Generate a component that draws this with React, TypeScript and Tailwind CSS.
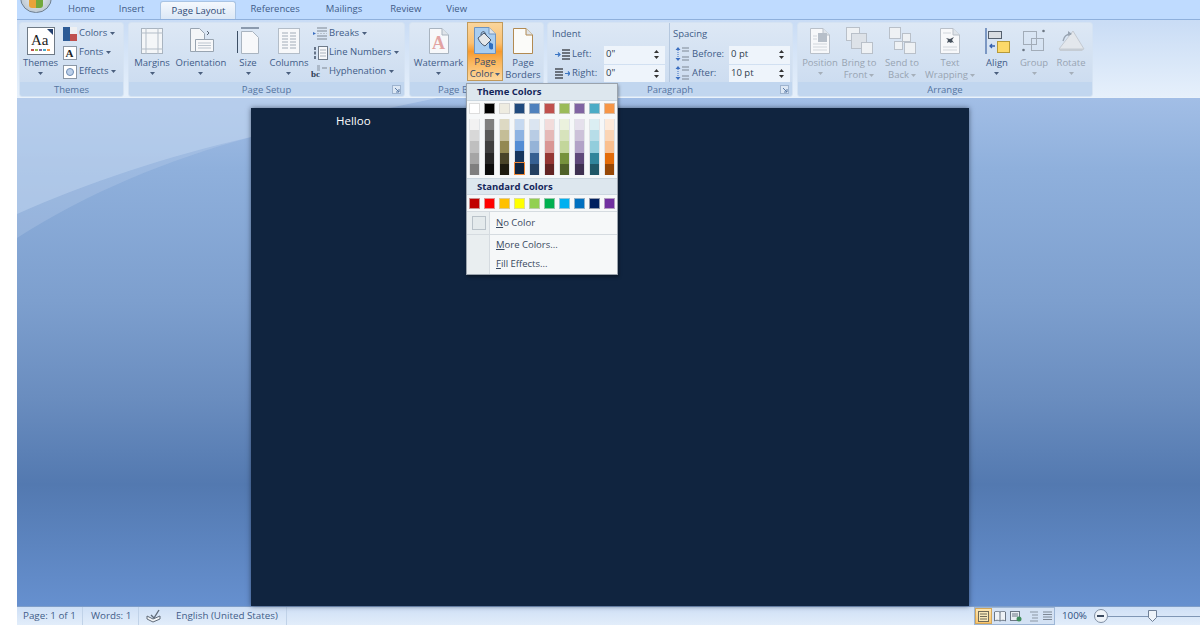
import React from 'react';

const shades = [
  ['#ffffff', '#f2f2f2', '#d8d8d8', '#bfbfbf', '#a5a5a5', '#7f7f7f'],
  ['#000000', '#7f7f7f', '#595959', '#3f3f3f', '#262626', '#0c0c0c'],
  ['#eeece1', '#ddd9c3', '#c4bd97', '#938953', '#494429', '#1d1b10'],
  ['#1f497d', '#c6d9f0', '#8db3e2', '#548dd4', '#17365d', '#0f243e'],
  ['#4f81bd', '#dbe5f1', '#b8cce4', '#95b3d7', '#366092', '#244061'],
  ['#c0504d', '#f2dcdb', '#e5b9b7', '#d99694', '#953734', '#632423'],
  ['#9bbb59', '#ebf1dd', '#d7e3bc', '#c3d69b', '#76923c', '#4f6128'],
  ['#8064a2', '#e5e0ec', '#ccc1d9', '#b2a2c7', '#5f497a', '#3f3151'],
  ['#4bacc6', '#dbeef3', '#b7dde8', '#92cddc', '#31859b', '#205867'],
  ['#f79646', '#fdeada', '#fbd5b5', '#fac08f', '#e36c09', '#974806'],
];
const standard = ['#c00000', '#ff0000', '#ffc000', '#ffff00', '#92d050', '#00b050', '#00b0f0', '#0070c0', '#002060', '#7030a0'];

function Caret({ light }: { light?: boolean }) {
  return (
    <svg width="5" height="3" viewBox="0 0 5 3" className="shrink-0">
      <path d="M0 0h5L2.5 3z" fill={light ? '#a5afba' : '#4a5f7e'} />
    </svg>
  );
}

// page with a folded corner, the base of most ribbon icons
function Doc({ w = 22, h = 28, stroke = '#a9b4c0', fill = '#f7f8fa', children }: { w?: number; h?: number; stroke?: string; fill?: string; children?: React.ReactNode }) {
  return (
    <svg width={w} height={h} viewBox={`0 0 ${w} ${h}`}>
      <path d={`M.5.5H${w - 7}L${w - .5} 7V${h - .5}H.5z`} fill={fill} stroke={stroke} />
      <path d={`M${w - 7} .5V7H${w - .5}`} fill="#dfe4ea" stroke={stroke} />
      {children}
    </svg>
  );
}

function Big({ w, lines, icon, disabled, caret = 'below', active }: { w: number; lines: string[]; icon: React.ReactNode; disabled?: boolean; caret?: 'below' | 'inline' | 'none'; active?: boolean }) {
  const color = disabled ? 'text-[#98a4b2]' : 'text-[#3f5c88]';
  return (
    <div
      style={{ width: w }}
      className={`flex flex-col items-center shrink-0 h-[59px] ${active ? 'border border-[#c19a5b] bg-[linear-gradient(to_bottom,#fad59c_0%,#fbc173_35%,#f79a2e_50%,#fbb85f_70%,#fdd79d_100%)] -mt-px pt-[3px] text-[#34486a]' : `pt-[3px] ${color}`}`}
    >
      <div className="h-[29px] flex items-center justify-center">{icon}</div>
      <div className="mt-[2px] flex flex-col items-center text-[9.5px] leading-[12px] whitespace-nowrap">
        {lines.map((l, i) => (
          <div key={l} className="flex items-center gap-[2px]">
            {l}
            {caret === 'inline' && i === lines.length - 1 && <Caret light={disabled} />}
          </div>
        ))}
        {caret === 'below' && <div className="mt-[3px]"><Caret light={disabled} /></div>}
      </div>
    </div>
  );
}

function Small({ icon, label }: { icon: React.ReactNode; label: string }) {
  return (
    <div className="h-[19px] flex items-center text-[9.5px] text-[#3f5c88] whitespace-nowrap">
      <div className="w-[18px] flex items-center justify-center pr-[1px] shrink-0">{icon}</div>
      <span className="mr-[3px]">{label}</span>
      <Caret />
    </div>
  );
}

function Launcher() {
  return (
    <div className="absolute right-[3px] top-[3px] w-[9px] h-[9px] border border-[#9fb4cf] bg-[#dce7f4] flex items-end justify-end">
      <svg width="5" height="5" viewBox="0 0 5 5"><path d="M0 0l4 4M4 1v3H1" stroke="#5b7ba6" fill="none" /></svg>
    </div>
  );
}

function Group({ w, label, launcher, children, labelColor = 'text-[#54749f]' }: { w: number; label: string; launcher?: boolean; children: React.ReactNode; labelColor?: string }) {
  return (
    <div style={{ width: w }} className="shrink-0 h-[75px] rounded-[3px] border border-[#d5e3f3] bg-[linear-gradient(to_bottom,#dde8f5,#c9daef)] flex flex-col">
      <div className="flex-1 flex min-h-0">{children}</div>
      <div className={`relative h-[14px] shrink-0 bg-[#c1d6ef] rounded-b-[3px] text-center text-[9.5px] leading-[16px] whitespace-nowrap ${labelColor}`}>
        {label}
        {launcher && <Launcher />}
      </div>
    </div>
  );
}

function Spin({ value, w = 61 }: { value: string; w?: number }) {
  return (
    <div style={{ width: w }} className="h-[18px] bg-[#eef4fb] flex items-center justify-between pl-[2px] pr-[6px] text-[9.5px] text-[#2f3b4d] shrink-0">
      {value}
      <div className="flex flex-col gap-[3px]">
        <svg width="5" height="3" viewBox="0 0 5 3"><path d="M0 3h5L2.5 0z" fill="#333" /></svg>
        <svg width="5" height="3" viewBox="0 0 5 3"><path d="M0 0h5L2.5 3z" fill="#333" /></svg>
      </div>
    </div>
  );
}

function IndentIcon({ flip }: { flip?: boolean }) {
  return (
    <svg width="15" height="12" viewBox="0 0 15 12">
      <path d={flip ? 'M0 1h8M0 4h8M0 7h8M0 10h8' : 'M7 1h8M7 4h8M7 7h8M7 10h8'} stroke="#4a4f57" strokeWidth="1.3" />
      <path d={flip ? 'M10 5.500h5m-2-2l2 2-2 2' : 'M0 5.500h5m-2-2l2 2-2 2'} stroke="#3c76c4" strokeWidth="1.2" fill="none" />
    </svg>
  );
}

function SpacingIcon() {
  return (
    <svg width="14" height="15" viewBox="0 0 14 15">
      <path d="M7 1h7M7 4h7M7 10h7M7 13h7" stroke="#7d8794" />
      <path d="M3 0l2.5 3h-5zM3 14l-2.5-3h5z" fill="#3c6fc0" />
      <path d="M3 3v8" stroke="#3c6fc0" strokeDasharray="1 1" />
    </svg>
  );
}

function Swatch({ color }: { color: string }) {
  return <div style={{ background: color }} className="w-[11px] h-[11px] border border-[#cfcfcf]/70" />;
}

function ColorMenu() {
  return (
    <div className="absolute left-[466px] top-[83px] w-[152px] h-[192px] bg-[#f6f8f9] border border-[#9aa3ad] shadow-[1px_2px_3px_rgba(0,0,0,.35)] flex flex-col text-[#3a4a5f]">
      <div className="h-[17px] shrink-0 bg-[#dde7ee] pl-[10px] text-[9.5px] leading-[16px] font-bold text-[#15265a] border-b border-[#cbd7e0]">Theme Colors</div>
      <div className="flex gap-[4px] pl-[2px] pt-[2px] h-[18px] shrink-0">
        {shades.map(col => <Swatch key={col[0]} color={col[0]} />)}
      </div>
      <div className="flex gap-[4px] pl-[2px] h-[59px] shrink-0">
        {shades.map((col, c) => (
          <div key={col[0]} className="w-[11px] h-[56px] flex flex-col border-x border-[#d4d7da]/60">
            {col.slice(1).map((s, r) => (
              <div
                key={r}
                style={{ background: s }}
                className={`flex-1 ${c === 3 && r === 4 ? 'relative z-10 -mx-px border border-[#ee8a3c]' : ''}`}
              />
            ))}
          </div>
        ))}
      </div>
      <div className="h-[17px] shrink-0 bg-[#dde7ee] pl-[10px] text-[9.5px] leading-[15px] font-bold text-[#15265a] border-y border-[#cbd7e0]">Standard Colors</div>
      <div className="flex gap-[4px] pl-[2px] pt-[3px] h-[16px] shrink-0">
        {standard.map(s => <Swatch key={s} color={s} />)}
      </div>
      <div className="flex-1 flex flex-col border-t border-[#d5dbe0] bg-[linear-gradient(to_right,#e9eef0_22px,#d5dbe0_22px,#d5dbe0_23px,transparent_23px)] text-[9.5px]">
        <div className="h-[23px] shrink-0 flex items-center border-b border-[#d5dbe0]">
          <div className="w-[23px] flex justify-center shrink-0"><div className="w-[14px] h-[14px] border border-[#b9c2c9] bg-[#e4eaec]" /></div>
          <span className="ml-[6px]"><span className="underline">N</span>o Color</span>
        </div>
        <div className="h-[20px] shrink-0 flex items-center pl-[29px]"><span><span className="underline">M</span>ore Colors...</span></div>
        <div className="h-[19px] shrink-0 flex items-center pl-[29px]"><span><span className="underline">F</span>ill Effects...</span></div>
      </div>
    </div>
  );
}

export default function App() {
  const tabs = 'px-3 text-[9.5px] leading-[20px] text-[#3f5c88]';
  const gray = '#b9c0c9';
  return (
    <div className="relative w-[1200px] h-[630px] overflow-hidden bg-white flex font-['Open_Sans',sans-serif]">
      <div className="w-[17px] shrink-0" />
      <div className="flex-1 h-[625px] flex flex-col min-w-0">
        {/* tab strip */}
        <div className="h-[19px] shrink-0 bg-[#bfdbff] flex pl-[39px] items-end">
          <div className={tabs}>Home</div>
          <div className={tabs}>Insert</div>
          <div className="ml-[4px] h-[18px] w-[76px] text-center rounded-t-[3px] border border-b-0 border-[#a9c4e4] bg-[linear-gradient(to_bottom,#f4f8fd,#dce8f6)] text-[9.5px] leading-[18px] text-[#2f4a75]">Page Layout</div>
          <div className={`ml-[2px] ${tabs}`}>References</div>
          <div className={`ml-[2px] ${tabs}`}>Mailings</div>
          <div className={`ml-[4px] ${tabs}`}>Review</div>
          <div className={`ml-[1px] ${tabs}`}>View</div>
        </div>

        {/* ribbon */}
        <div className="h-[79px] shrink-0 border-t border-[#8fb0dc] border-b border-b-[#e9f2fb] bg-[linear-gradient(to_bottom,#c9dcf5,#e6f0fb)] flex pl-[2px] pt-[2px]">
          <Group w={105} label="Themes">
            <Big w={41} lines={['Themes']} icon={
              <svg width="28" height="28" viewBox="0 0 28 28">
                <rect x=".5" y=".5" width="27" height="27" fill="#fff" stroke="#6f7a86" />
                <path d="M20 2h6v6z" fill="#24406e" />
                <text x="4" y="18" fontFamily="'Liberation Serif',serif" fontSize="15" fill="#222">Aa</text>
                <path d="M4 23h3" stroke="#c0504d" strokeWidth="2" /><path d="M8 23h3" stroke="#9bbb59" strokeWidth="2" /><path d="M12 23h3" stroke="#8064a2" strokeWidth="2" /><path d="M16 23h3" stroke="#4bacc6" strokeWidth="2" /><path d="M20 23h3" stroke="#f79646" strokeWidth="2" />
              </svg>
            } />
            <div className="pt-[1px]">
              <Small label="Colors" icon={
                <svg width="14" height="14" viewBox="0 0 14 14"><rect width="7" height="14" fill="#2d5b96" /><rect x="7" width="7" height="7" fill="#eef0f2" /><rect x="7" y="7" width="7" height="7" fill="#c0504d" /></svg>
              } />
              <Small label="Fonts" icon={
                <div className="w-[14px] h-[14px] border border-[#8b97a5] bg-white text-[11px] leading-[12px] text-center font-['Liberation_Serif',serif] font-bold text-[#222]">A</div>
              } />
              <Small label="Effects" icon={
                <svg width="14" height="14" viewBox="0 0 14 14"><rect x=".5" y=".5" width="13" height="13" fill="#fff" stroke="#8b97a5" /><circle cx="7" cy="7" r="3.5" fill="#bcd0ea" stroke="#6f8db5" /></svg>
              } />
            </div>
          </Group>
          <div className="w-[4px] shrink-0" />

          <Group w={277} label="Page Setup" launcher>
            <Big w={46} lines={['Margins']} icon={
              <svg width="22" height="26" viewBox="0 0 22 26"><rect x=".5" y=".5" width="21" height="25" fill="#f4f6f8" stroke="#a9b4c0" /><path d="M5 0v26M17 0v26M0 5h22M0 21h22" stroke="#b3bdc8" /></svg>
            } />
            <Big w={52} lines={['Orientation']} icon={
              <svg width="26" height="26" viewBox="0 0 26 26"><path d="M2.500.5h9l5 5v18h-14z" fill="#f4f6f8" stroke="#98a4b1" /><path d="M7.500 11.500h18v12h-18z" fill="#f7f8fa" stroke="#98a4b1" /><path d="M10 15h13M10 17.500h13M10 20h13" stroke="#bcc5cf" /><path d="M19 3l2 2-2 2" stroke="#5a6675" fill="none" /></svg>
            } />
            <Big w={42} lines={['Size']} icon={
              <svg width="22" height="27" viewBox="0 0 22 27"><path d="M4 1h18M.5 4v22" stroke="#3d4f66" /><path d="M4.500 4.500h11l6 6v16h-17z" fill="#f7f8fa" stroke="#a9b4c0" /></svg>
            } />
            <Big w={40} lines={['Columns']} icon={
              <svg width="22" height="26" viewBox="0 0 22 26"><rect x=".5" y=".5" width="21" height="25" fill="#f7f8fa" stroke="#b3bdc8" /><path d="M4 5h6M12 5h6M4 8h6M12 8h6M4 11h6M12 11h6M4 14h6M12 14h6M4 17h6M12 17h6M4 20h6M12 20h6" stroke="#a2acb8" /></svg>
            } />
            <div className="pt-[1px] pl-[2px]">
              <Small label="Breaks" icon={
                <svg width="16" height="14" viewBox="0 0 16 14"><path d="M5 1h10M5 4h10M5 9h10M5 12h10" stroke="#7d8794" /><path d="M1 5l3 1.500-3 1.500z" fill="#3c6fc0" /><path d="M5 6.500h10" stroke="#b9c2cc" strokeDasharray="2 1" /></svg>
              } />
              <Small label="Line Numbers" icon={
                <svg width="16" height="14" viewBox="0 0 16 14"><rect x="6.500" y=".5" width="9" height="13" fill="#f7f8fa" stroke="#6f7b89" /><path d="M8 4h6M8 7h6M8 10h6" stroke="#aab3bd" /><path d="M3 1v3M3 5.500v3M3 10v3" stroke="#2b3a50" strokeWidth="1.300" /></svg>
              } />
              <Small label="Hyphenation" icon={
                <svg width="17" height="14" viewBox="0 0 17 14"><text x="0" y="12" fontFamily="'Liberation Serif',serif" fontSize="9" fontWeight="700" fill="#2b3a50">bc</text><path d="M11 3h5" stroke="#7d8794" /><path d="M6 1h3M6 3h3M6 5h3" stroke="#8792a0" /></svg>
              } />
            </div>
          </Group>
          <div className="w-[4px] shrink-0" />

          <Group w={135} label="Page Background">
            <Big w={57} lines={['Watermark']} icon={
              <Doc w={20} h={26}><text x="3" y="21" fontFamily="'Liberation Serif',serif" fontSize="18" fontWeight="700" fill="#e2a3a3">A</text></Doc>
            } />
            <Big w={36} lines={['Page', 'Color']} caret="inline" active icon={
              <Doc w={22} h={27} stroke="#6e93bf" fill="#a9cdf0">
                <path d="M4 11l6-5 7 7-6 6c-3-1-6-5-7-8z" fill="#e4e7ea" stroke="#49576b" />
                <path d="M7 8c0-4 4-5 5 0" fill="none" stroke="#49576b" />
                <path d="M15 15l4 2 0 5c-2 1-4 0-4-2z" fill="#2f6fc0" />
              </Doc>
            } />
            <Big w={40} lines={['Page', 'Borders']} caret="none" icon={
              <Doc w={20} h={26} stroke="#b28a52" fill="#fbfbf9" />
            } />
          </Group>
          <div className="w-[3px] shrink-0" />

          <Group w={246} label="Paragraph" launcher>
            <div className="w-[122px] shrink-0 border-r border-[#b5c8df] pl-[4px] text-[9.5px] text-[#3f5c88]">
              <div className="h-[22px] leading-[21px]">Indent</div>
              <div className="h-[19px] flex items-center">
                <div className="w-[20px] pl-[3px]"><IndentIcon /></div>
                <span className="w-[32px]">Left:</span>
                <Spin value={'0"'} />
              </div>
              <div className="h-[19px] flex items-center">
                <div className="w-[20px] pl-[3px]"><IndentIcon flip /></div>
                <span className="w-[32px]">Right:</span>
                <Spin value={'0"'} />
              </div>
            </div>
            <div className="pl-[3px] text-[9.5px] text-[#3f5c88]">
              <div className="h-[22px] leading-[21px]">Spacing</div>
              <div className="h-[19px] flex items-center">
                <div className="w-[19px] pl-[2px]"><SpacingIcon /></div>
                <span className="w-[37px]">Before:</span>
                <Spin value="0 pt" />
              </div>
              <div className="h-[19px] flex items-center">
                <div className="w-[19px] pl-[2px]"><SpacingIcon /></div>
                <span className="w-[37px]">After:</span>
                <Spin value="10 pt" />
              </div>
            </div>
          </Group>
          <div className="w-[4px] shrink-0" />

          <Group w={296} label="Arrange">
            <div className="w-[2px] shrink-0" />
            <Big w={40} disabled lines={['Position']} icon={
              <Doc w={20} h={26} stroke={gray}><rect x="8" y="5" width="9" height="9" fill="#b7bfc9" /><path d="M3 8h4M3 11h4M3 16h14M3 19h14M3 22h14" stroke="#d1d6dc" /></Doc>
            } />
            <Big w={38} disabled lines={['Bring to', 'Front']} caret="inline" icon={
              <svg width="27" height="27" viewBox="0 0 27 27"><rect x=".5" y=".5" width="13" height="13" fill="#eef1f4" stroke={gray} /><rect x="5.500" y="6.500" width="15" height="15" fill="#dde2e8" stroke={gray} /><rect x="15.500" y="15.500" width="11" height="11" fill="#eef1f4" stroke={gray} /></svg>
            } />
            <Big w={48} disabled lines={['Send to', 'Back']} caret="inline" icon={
              <svg width="27" height="27" viewBox="0 0 27 27"><rect x=".5" y=".5" width="11" height="11" fill="#eef1f4" stroke={gray} /><rect x="13.500" y="6.500" width="8" height="8" fill="#eef1f4" stroke={gray} /><rect x="5.500" y="14.500" width="8" height="8" fill="#eef1f4" stroke={gray} /><rect x="15.500" y="15.500" width="11" height="11" fill="#eef1f4" stroke={gray} /></svg>
            } />
            <Big w={48} disabled lines={['Text', 'Wrapping']} caret="inline" icon={
              <Doc w={20} h={26} stroke={gray}><path d="M6 10l4 1 4-2-2 3 2 3-2-1-1 1-2-1-2 1 1-3z" fill="#46505c" /><path d="M3 19h14M3 22h14M3 5h8" stroke="#d1d6dc" /></Doc>
            } />
            <Big w={46} lines={['Align']} icon={
              <svg width="25" height="26" viewBox="0 0 25 26"><path d="M1 0v26" stroke="#5d7eb3" strokeWidth="1.500" /><rect x="3.500" y="3.500" width="13" height="7" fill="#d9dde2" stroke="#55606e" /><rect x="12.500" y="13.500" width="12" height="11" fill="#fcd96a" stroke="#b69a3a" /><path d="M10 18H5m2-2l-2 2 2 2" stroke="#3560ad" strokeWidth="1.300" fill="none" /></svg>
            } />
            <Big w={28} disabled lines={['Group']} icon={
              <svg width="24" height="24" viewBox="0 0 24 24"><rect x="1.500" y="2.500" width="13" height="13" fill="none" stroke="#a2acb8" /><rect x="9.500" y="9.500" width="12" height="12" fill="none" stroke="#a2acb8" /><circle cx="1.500" cy="21" r="1.300" fill="#6c7784" /><circle cx="21.500" cy="2" r="1.300" fill="#6c7784" /></svg>
            } />
            <Big w={46} disabled lines={['Rotate']} icon={
              <svg width="27" height="24" viewBox="0 0 27 24"><path d="M1 20L15 2l11 18z" fill="#e3e7ec" stroke="#c4cad2" /><path d="M1 20h25l-2 2H2z" fill="#c5ccd4" /><path d="M5 12c1-5 4-7 8-7" stroke="#98a4b2" strokeWidth="1.300" fill="none" /><path d="M10 2l4 3-4 2z" fill="#98a4b2" /></svg>
            } />
          </Group>
        </div>

        {/* document area */}
        <div className="relative flex-1 min-h-0 flex flex-col pl-[234px] pt-[10px] bg-[linear-gradient(to_bottom,#a2bee6_0%,#8fb0dc_14%,#7d9fce_40%,#6a8dbf_59%,#5379b0_76%,#6690cf_100%)]">
          <svg className="absolute inset-0" width="1183" height="508" viewBox="0 0 1183 508">
            <path d="M0 140C70 95 150 62 234 39L420 0H0z" fill="#c6d9f1" fillOpacity=".25" />
            <path d="M0 116C70 85 150 58 234 39L420 0H0z" fill="#c6d9f1" fillOpacity=".45" />
          </svg>
          <div className="relative w-[718px] flex-1 bg-[#10243f] shadow-[0_0_5px_rgba(20,30,50,.6)] pl-[85px] pt-[5px] text-[11.5px] leading-[16px] text-white">Helloo</div>
        </div>

        {/* status bar */}
        <div className="h-[19px] shrink-0 border-t border-[#7f9ec9] bg-[linear-gradient(to_bottom,#cfe0f6,#e2edfa)] flex items-center text-[9.8px] text-[#3f5c88]">
          <div className="w-[66px] pl-[6px] h-full leading-[17px] border-r border-[#c0d2e8]">Page: 1 of 1</div>
          <div className="w-[56px] pl-[8px] h-full leading-[17px] border-r border-[#c0d2e8]">Words: 1</div>
          <div className="w-[148px] h-full flex items-center pl-[7px] border-r border-[#c0d2e8]">
            <svg width="16" height="14" viewBox="0 0 16 14" className="shrink-0"><path d="M1 7l6 3 7-3v3l-7 3-6-3z" fill="#f4f6f8" stroke="#5f6a78" /><path d="M5 6l3 3 5-8" stroke="#5f6a78" strokeWidth="1.400" fill="none" /></svg>
            <span className="ml-[14px] whitespace-nowrap">English (United States)</span>
          </div>
          <div className="ml-auto flex items-center h-full shrink-0 w-[226px]">
            <div className="h-[18px] w-[81px] flex border border-[#9db6d6] bg-[#d4e2f4] shrink-0">
              <div className="w-[17px] h-full flex items-center justify-center border border-[#d3a75a] bg-[linear-gradient(to_bottom,#fde6b0,#fac56d)]">
                <svg width="11" height="11" viewBox="0 0 11 11"><rect x=".5" y=".5" width="10" height="10" fill="#f7e7b8" stroke="#6f6a58" /><path d="M2 3h7M2 5.500h7M2 8h7" stroke="#6f6a58" /></svg>
              </div>
              <div className="w-[16px] flex items-center justify-center">
                <svg width="12" height="11" viewBox="0 0 12 11"><path d="M6 1C4 0 2 0 .5 1v9C2 9 4 9 6 10c2-1 4-1 5.500 0V1C10 0 8 0 6 1zM6 1v9" fill="#eef2f6" stroke="#6b7684" /></svg>
              </div>
              <div className="w-[16px] flex items-center justify-center">
                <svg width="12" height="11" viewBox="0 0 12 11"><rect x=".5" y=".5" width="9" height="9" fill="#e9eef3" stroke="#6b7684" /><path d="M2 3h6M2 5h6" stroke="#6b7684" /><circle cx="9" cy="8" r="2.500" fill="#3f8d5b" /></svg>
              </div>
              <div className="w-[16px] flex items-center justify-center">
                <svg width="11" height="11" viewBox="0 0 11 11"><path d="M3 1h8M5 4h6M5 7h6M3 10h8" stroke="#8b96a3" /></svg>
              </div>
              <div className="w-[14px] flex items-center justify-center">
                <svg width="11" height="10" viewBox="0 0 11 10"><path d="M1 1h9M1 3.500h9M1 6h9M1 8.500h9" stroke="#7d8794" strokeWidth="1.200" /></svg>
              </div>
            </div>
            <span className="ml-[7px] text-[#2f4f80]">100%</span>
            <div className="ml-[7px] w-[14px] h-[14px] rounded-full border border-[#7f8ea3] bg-[#eef3f9] flex items-center justify-center shrink-0">
              <div className="w-[7px] h-[2px] bg-[#3b4a5f]" />
            </div>
            <div className="relative flex-1 h-px bg-[#7f96b5]">
              <svg width="9" height="12" viewBox="0 0 9 12" className="absolute left-[40px] -top-[6px]"><path d="M.5.5h8v7l-4 4-4-4z" fill="#eef3f9" stroke="#6e7f96" /></svg>
            </div>
          </div>
        </div>
      </div>

      {/* office button, cut off by the top of the window */}
      <div className="absolute left-[20px] -top-[18px] w-[32px] h-[31px] rounded-full border border-[#6f7f8f] bg-[radial-gradient(circle,#f2f4f6,#a9b8c6)] flex items-end justify-center pb-[4px]">
        <div className="w-[14px] h-[9px] rounded-b-[3px] bg-[linear-gradient(to_right,#e8a33a,#e8a33a_50%,#72a83c_50%)]" />
      </div>

      <ColorMenu />
    </div>
  );
}
